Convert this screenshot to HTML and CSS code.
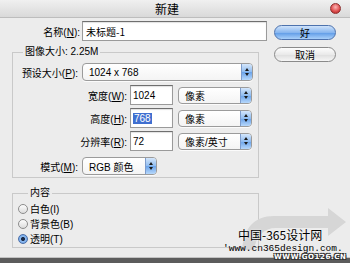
FILE: index.html
```html
<!DOCTYPE html>
<html lang="zh">
<head>
<meta charset="utf-8">
<title>新建</title>
<link rel="stylesheet" href="styles.css">
</head>
<body>
<div class="window">
  <div class="titlebar">
    <span class="title">新建</span>
    <span class="close"></span>
  </div>
  <div class="content">
    <div class="main">
      <div class="name-row">
        <label class="lbl name-lbl">名称(<u>N</u>):</label>
        <div class="input name-input">未标题-1</div>
      </div>
      <fieldset class="group size-group">
        <legend>图像大小: 2.25M</legend>
        <div class="row preset-row">
          <label class="lbl short-lbl">预设大小(<u>P</u>):</label>
          <div class="select preset-select"><span class="val">1024 x 768</span><span class="arrow"><i class="up"></i><i class="down"></i></span></div>
        </div>
        <div class="row dim-row">
          <label class="lbl long-lbl">宽度(<u>W</u>):</label>
          <div class="input num-input">1024</div>
          <div class="select unit-select"><span class="val">像素</span><span class="arrow"><i class="up"></i><i class="down"></i></span></div>
        </div>
        <div class="row dim-row">
          <label class="lbl long-lbl">高度(<u>H</u>):</label>
          <div class="input num-input"><span class="sel">768</span></div>
          <div class="select unit-select"><span class="val">像素</span><span class="arrow"><i class="up"></i><i class="down"></i></span></div>
        </div>
        <div class="row dim-row">
          <label class="lbl long-lbl">分辨率(<u>R</u>):</label>
          <div class="input num-input">72</div>
          <div class="select unit-select"><span class="val">像素/英寸</span><span class="arrow"><i class="up"></i><i class="down"></i></span></div>
        </div>
        <div class="row mode-row">
          <label class="lbl short-lbl">模式(<u>M</u>):</label>
          <div class="select mode-select"><span class="val">RGB 颜色</span><span class="arrow"><i class="up"></i><i class="down"></i></span></div>
        </div>
      </fieldset>
      <fieldset class="group content-group">
        <legend>内容</legend>
        <div class="radio-row"><span class="radio"></span><span>白色(I)</span></div>
        <div class="radio-row"><span class="radio"></span><span>背景色(B)</span></div>
        <div class="radio-row"><span class="radio on"></span><span>透明(T)</span></div>
      </fieldset>
    </div>
    <div class="buttons">
      <div class="btn default">好</div>
      <div class="btn">取消</div>
    </div>
  </div>
  <svg class="wm-logo" width="108" height="46" viewBox="0 0 108 46">
    <path d="M2 44 C4 22 14 10 34 10 L88 10 L88 2 L106 16 L88 30 L88 22 L36 22 C24 22 16 30 14 44 Z" fill="#d6d6d6"/>
  </svg>
  <div class="wm-cn">中国-365设计网</div>
  <div class="wm-url">'www.cn365design.com.</div>
</div>
<div class="wm-go">WWW.GO126.CN</div>
</body>
</html>
```
FILE: styles.css
```css
* { box-sizing: border-box; }
body {
  margin: 0;
  background: #5c5c5c;
  width: 350px;
  height: 263px;
  overflow: hidden;
  position: relative;
}
.window {
  width: 350px;
  height: 258px;
  background: #ececec;
  border-bottom: 1px solid #c2c2c2;
  font-family: "Liberation Sans", "Noto Sans CJK SC", sans-serif;
  font-size: 10px;
  color: #000;
  position: relative;
  overflow: hidden;
}
.titlebar {
  height: 18px;
  background: linear-gradient(#f0f0f0, #d9d9d9);
  border-bottom: 1px solid #bdbdbd;
  display: flex;
  align-items: center;
}
.title {
  margin-left: 155px;
  font-size: 12px;
  font-family: "Noto Sans CJK SC", sans-serif;
}
.close {
  margin-left: auto;
  margin-right: 9px;
  width: 11px;
  height: 11px;
  border-radius: 50%;
  background: radial-gradient(circle at 50% 35%, #fbb5b5 0, #e05252 55%, #a81c1c 100%);
  border: 1px solid #8d3030;
}
.content { display: flex; }
.main { width: 267px; }
.lbl { text-align: right; white-space: nowrap; flex: none; }
.name-row {
  display: flex;
  align-items: center;
  margin-top: 3px;
  height: 20px;
}
.name-lbl { width: 80px; margin-right: 2px; }
.input {
  background: #fff;
  border: 1px solid #9a9a9a;
  border-top-color: #6f6f6f;
  box-shadow: inset 0 1px 1px rgba(0,0,0,0.12);
  height: 20px;
  display: flex;
  align-items: center;
  padding-left: 3px;
  font-family: "Noto Sans CJK SC", sans-serif;
}
.name-input { width: 185px; }
.group {
  margin: 5px 8px 0 12px;
  padding: 0;
  border: 1px solid #c9c9c9;
  min-width: 0;
}
.group legend {
  margin-left: 10px;
  padding: 0 2px;
  line-height: 12px;
  height: 12px;
}
.size-group { padding: 4px 0 1px 0; }
.row {
  display: flex;
  align-items: center;
  height: 20px;
}
.row + .row { margin-top: 3px; }
.mode-row { margin-top: 5px !important; }
.short-lbl { width: 65px; margin-right: 4px; }
.long-lbl { width: 114px; margin-right: 3px; }
.num-input { width: 43px; margin-right: 5px; padding-left: 2px; font-family: "Liberation Sans", sans-serif; }
.sel { background: #3f6fd0; color: #fff; padding: 0 1px; line-height: 11px; }
.select {
  display: flex;
  align-items: stretch;
  height: 18px;
  background: linear-gradient(#ffffff, #f4f4f4);
  border: 1px solid #9b9b9b;
  border-radius: 4px;
  overflow: hidden;
  box-shadow: 0 1px 0 rgba(255,255,255,0.8);
}
.select .val { flex: 1; display: flex; align-items: center; padding-left: 6px; white-space: nowrap; }
.select .arrow {
  width: 11px;
  flex: none;
  border-left: 1px solid #7d9ccc;
  background: linear-gradient(#d4e6fb, #8fbcf0 50%, #6aa3ea 51%, #b7d8fb);
  display: flex;
  flex-direction: column;
  align-items: center;
  justify-content: center;
  gap: 2px;
}
.arrow i { display: block; width: 0; height: 0; border-left: 2px solid transparent; border-right: 2px solid transparent; }
.arrow .up { border-bottom: 3px solid #1a1a1a; }
.arrow .down { border-top: 3px solid #1a1a1a; }
.preset-select { width: 171px; }
.unit-select { width: 74px; height: 17px; }
.mode-select { width: 75px; }
.content-group { margin-top: 9px; padding: 2px 0 1px 5px; }
.radio-row { display: flex; align-items: center; height: 15px; }
.radio {
  width: 10px;
  height: 10px;
  border-radius: 50%;
  border: 1px solid #8c8c8c;
  background: linear-gradient(#fdfdfd, #dcdcdc);
  margin-right: 2px;
  position: relative;
}
.radio.on {
  border-color: #4c6fa8;
  background: radial-gradient(circle, #1b2b48 0, #1b2b48 1.6px, #8fbcf0 2.4px, #5b96e3 100%);
}
.buttons {
  margin-left: 7px;
  margin-top: 7px;
  display: flex;
  flex-direction: column;
  gap: 7px;
}
.btn {
  width: 62px;
  height: 15px;
  border-radius: 8px;
  border: 1px solid #8a8a8a;
  background: linear-gradient(#fdfdfd, #eaeaea 50%, #dedede 51%, #f6f6f6);
  display: flex;
  align-items: center;
  justify-content: center;
  font-family: "Noto Sans CJK SC", sans-serif;
  font-size: 10px;
}
.btn.default {
  border-color: #4d72ad;
  background: linear-gradient(#cfe3fb, #88b6ef 50%, #5d9ae6 51%, #a9d0fa);
}
.wm-logo { position: absolute; left: 240px; top: 206px; }
.wm-cn {
  position: absolute;
  left: 238px;
  top: 227px;
  font-family: "Noto Sans CJK SC", sans-serif;
  font-size: 12px;
  line-height: 16px;
  color: #000;
  text-shadow: 0 0 2px #fff;
}
.wm-url {
  position: absolute;
  left: 223px;
  top: 243px;
  font-family: "Liberation Mono", monospace;
  font-size: 9.5px;
  line-height: 12px;
  color: #000;
}
.wm-go {
  position: absolute;
  left: 274px;
  top: 253px;
  font-family: "DejaVu Sans", sans-serif;
  font-weight: bold;
  font-size: 7px;
  line-height: 9px;
  letter-spacing: 0.6px;
  color: #fff;
  text-shadow: 1px 1px 0 #333, -1px -1px 0 #333, 1px -1px 0 #333, -1px 1px 0 #333;
}
```
